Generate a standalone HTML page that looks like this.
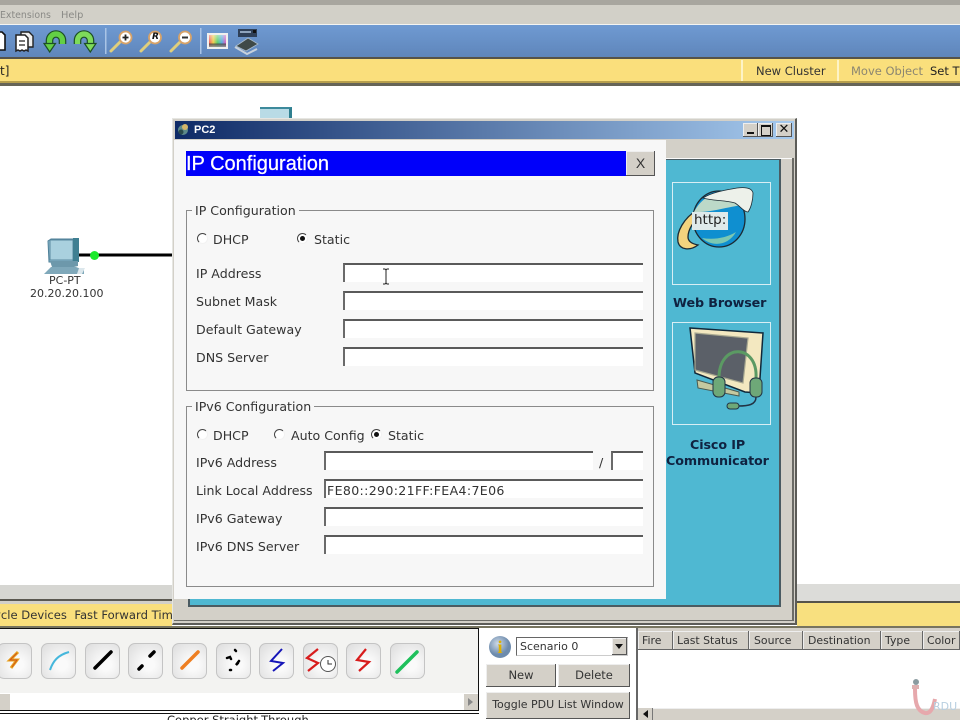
<!DOCTYPE html>
<html><head><meta charset="utf-8"><style>
html,body{margin:0;padding:0;background:#fff}
#p{position:relative;width:960px;height:720px;overflow:hidden;background:#fff;font-family:"DejaVu Sans","Liberation Sans",sans-serif;font-size:12px;color:#222}
.a{position:absolute}
.t{position:absolute;white-space:nowrap;line-height:16px;font-size:12.6px;color:#333}
.in{position:absolute;height:17px;background:#fff;border-top:2px solid #5a5a5a;border-left:2px solid #6a6a6a;box-sizing:content-box}
.fs{position:absolute;border:1px solid #8a8a8a;box-sizing:border-box}
.lg{position:absolute;background:#f7f7f7;padding:0 3px;font-size:12.6px;line-height:14px;color:#333;white-space:nowrap}
.r{position:absolute;width:9px;height:9px;border-radius:50%;border:1px solid #f2f2f2;border-top-color:#444;border-left-color:#444;background:#fff}
.r.on:after{content:"";position:absolute;left:2px;top:2px;width:5px;height:5px;background:#111;border-radius:50%}
.btn{position:absolute;background:#d4d0c8;box-shadow:inset -1px -1px 0 #555,inset 1px 1px 0 #eee;text-align:center;color:#333;font-size:12px}
.tool{position:absolute;top:643px;width:35px;height:36px;border-radius:7px;border:1px solid #c4c4c4;background:radial-gradient(circle at 60% 60%,#fafafa 20%,#dcdcdc 100%);box-sizing:border-box}
.th{position:absolute;top:631px;height:19px;background:#d4d0c8;box-shadow:inset -1px -1px 0 #666,inset 1px 1px 0 #eee;font-size:10.9px;line-height:20px;color:#333;padding-left:4px;box-sizing:border-box;white-space:nowrap;overflow:hidden}
.b{font-family:'DejaVu Sans',sans-serif;font-size:12.7px;font-weight:bold;color:#0f2240;letter-spacing:-.1px}
</style></head><body><div id="p">

<!-- top chrome -->
<div class="a" style="left:0;top:0;width:960px;height:5px;background:#a8a69f"></div>
<div class="a" style="left:0;top:5px;width:960px;height:19px;background:#d2d0c8"></div>
<div class="t" style="left:0;top:8px;font-size:9.400px;color:#8a8a86">Extensions</div>
<div class="t" style="left:61px;top:8px;font-size:9.800px;color:#8a8a86">Help</div>
<div class="a" style="left:0;top:24px;width:960px;height:1px;background:#f4f4f2"></div>
<div class="a" style="left:0;top:25px;width:960px;height:32px;background:linear-gradient(#6f9ad2,#5f86bb)"></div>
<div class="a" style="left:0;top:57px;width:960px;height:2px;background:#55534a"></div>
<div class="a" style="left:0;top:59px;width:960px;height:24px;background:#fadf7c"></div>
<div class="a" style="left:0;top:81px;width:960px;height:2px;background:#b79f4d"></div>
<div class="a" style="left:0;top:83px;width:960px;height:3px;background:#666458"></div>
<div class="t" style="left:0;top:63px;font-size:12px;color:#222">t]</div>
<div class="a" style="left:741px;top:60px;width:2px;height:21px;background:#fdf3c6"></div>
<div class="a" style="left:837px;top:60px;width:2px;height:21px;background:#fdf3c6"></div>
<div class="t" style="left:756px;top:63px;font-size:11.5px;color:#333">New Cluster</div>
<div class="t" style="left:851px;top:63px;font-size:11.5px;color:#8b8671">Move Object</div>
<div class="t" style="left:930px;top:63px;font-size:11.5px;color:#222">Set T</div>

<!-- toolbar icons -->
<svg class="a" style="left:0;top:25px" width="270" height="32" viewBox="0 25 270 32">
 <defs>
  <linearGradient id="hue" x1="0" x2="1" y1="0" y2="0"><stop offset="0" stop-color="#e55"/><stop offset=".25" stop-color="#ec4"/><stop offset=".5" stop-color="#5c6"/><stop offset=".75" stop-color="#5ad"/><stop offset="1" stop-color="#d5b"/></linearGradient>
  <linearGradient id="lt" x1="0" x2="0" y1="0" y2="1"><stop offset="0" stop-color="#fff" stop-opacity=".5"/><stop offset=".7" stop-color="#fff" stop-opacity="0"/><stop offset=".72" stop-color="#444" stop-opacity=".8"/><stop offset="1" stop-color="#999" stop-opacity=".9"/></linearGradient>
 </defs>
 <path d="M-2 32h4l3 3v15h-7z" fill="#fff" stroke="#111" stroke-width="1.6"/>
 <path d="M21 32h8l4 4v11h-12z" fill="#eee" stroke="#222" stroke-width="1.4"/>
 <path d="M16 35h9l3 3v13l-2-1-2 1-2-1-2 1-2-1-2 1z" fill="#fff" stroke="#222" stroke-width="1.5"/>
 <path d="M19 41h6M19 45h6" stroke="#222" stroke-width="1.2"/>
 <!-- undo -->
 <path d="M62.500 44v-3.500a6.500 6.500 0 0 0-13 0v4" fill="none" stroke="#1d4f25" stroke-width="7.600"/>
 <path d="M62.500 44v-3.500a6.500 6.500 0 0 0-13 0v4" fill="none" stroke="#63cf45" stroke-width="5.200"/>
 <path d="M44 43.500h11.500L49.700 52z" fill="#63cf45" stroke="#1d4f25" stroke-width="1.200"/>
 <!-- redo -->
 <path d="M77.500 44v-3.500a6.500 6.500 0 0 1 13 0v4" fill="none" stroke="#1d4f25" stroke-width="7.600"/>
 <path d="M77.500 44v-3.500a6.500 6.500 0 0 1 13 0v4" fill="none" stroke="#7edb5a" stroke-width="5.200"/>
 <path d="M84.500 43.500H96L90.300 52z" fill="#7edb5a" stroke="#1d4f25" stroke-width="1.200"/>
 <rect x="105" y="28" width="1.500" height="26" fill="#a9c4e6"/>
 <path d="M111 51l9-9" stroke="#e0cf7c" stroke-width="3" stroke-linecap="round"/><circle cx="125.500" cy="37.500" r="6" fill="#fff" stroke="#d7a268" stroke-width="1.800"/><path d="M122.500 37.500h6M125.500 34.500v6" stroke="#222" stroke-width="1.800"/>
 <path d="M141 51l9-9" stroke="#e0cf7c" stroke-width="3" stroke-linecap="round"/><circle cx="155" cy="37.500" r="6" fill="#fff" stroke="#d7a268" stroke-width="1.800"/>
 <path d="M171 51l9-9" stroke="#e0cf7c" stroke-width="3" stroke-linecap="round"/><circle cx="185" cy="37.500" r="6" fill="#fff" stroke="#d7a268" stroke-width="1.800"/><path d="M182 37.500h6" stroke="#333" stroke-width="2"/>
 <rect x="200" y="28" width="1.500" height="26" fill="#a9c4e6"/>
 <rect x="207" y="33" width="21" height="16" fill="#f0f0ee"/>
 <rect x="209" y="35" width="17" height="12" fill="url(#hue)"/><rect x="209" y="35" width="17" height="12" fill="url(#lt)"/>
 <rect x="238" y="29" width="19" height="8" fill="#2f4058"/><rect x="240" y="31" width="11" height="2" fill="#8fa4bd"/><rect x="253" y="30" width="3" height="3" fill="#111"/>
 <path d="M236 46l12-8 10 6-12 7z" fill="#3f4a48" stroke="#a9bccc" stroke-width=".8"/><path d="M235 47l12 7 10-5" fill="none" stroke="#c8d2dc" stroke-width="2"/>
</svg>
<div class="t" style="left:152px;top:29px;font-size:9px;font-weight:bold;font-style:italic;color:#111;line-height:16px">R</div>

<!-- canvas PC -->
<svg class="a" style="left:40px;top:232px" width="140" height="45" viewBox="40 232 140 45">
 <path d="M79 255H172" stroke="#000" stroke-width="3"/>
 <path d="M51 239h25v2l-3 2v19H49l-1-21z" fill="#8fbcd1" stroke="#4d7f97"/>
 <rect x="50" y="240" width="23" height="20" fill="#a9d0de" stroke="#5b8aa0"/>
 <rect x="73" y="238" width="6" height="24" fill="#3f7f92"/>
 <path d="M50 261h28v5l-4 1H52z" fill="#6d98ab"/>
 <path d="M44 274l7-7h25l8 3v4z" fill="#7fa8ba"/>
 <path d="M79 268l6 0-3 6h-5z" fill="#dce7ec"/>
 <circle cx="94.500" cy="255.500" r="4.500" fill="#1cea2c"/>
</svg>
<div class="t" style="left:49px;top:273px;font-size:11px;color:#333">PC-PT</div>
<div class="t" style="left:30px;top:286px;font-size:11px;color:#333">20.20.20.100</div>
<div class="a" style="left:260px;top:107px;width:32px;height:11px;background:#b9dbe6;border-top:2px solid #3d8a9c;border-right:3px solid #2f7f8f;box-sizing:border-box"></div>

<!-- hatch + bottom yellow -->
<div class="a" style="left:0;top:585px;width:172px;height:14px;background:#d6d6d2"></div>
<div class="a" style="left:797px;top:584px;width:163px;height:17px;background:#dcdcd9"></div>
<div class="a" style="left:0;top:599px;width:172px;height:2px;background:#5a5850"></div>
<div class="a" style="left:0;top:601px;width:172px;height:3px;background:#d3d0c8"></div>
<div class="a" style="left:797px;top:601px;width:163px;height:2px;background:#55534a"></div>
<div class="a" style="left:0;top:604px;width:172px;height:22px;background:#fadf7c"></div>
<div class="a" style="left:797px;top:603px;width:163px;height:23px;background:#f8e07f"></div>
<div class="a" style="left:0;top:626px;width:960px;height:2px;background:#77745f"></div>
<div class="t" style="left:-6px;top:607px;font-size:11.6px;color:#333;width:178px;overflow:hidden">ycle Devices&nbsp;&nbsp;Fast Forward Time</div>

<!-- dialog -->
<div class="a" style="left:172px;top:118px;width:625px;height:507px;background:#d3d0c8;border:1px solid #e6e6e2;border-right:2px solid #5c5c58;border-bottom:2px solid #5c5c58;box-sizing:border-box"></div>
<div class="a" style="left:175px;top:121px;width:619px;height:18px;background:linear-gradient(90deg,#0e2a66,#a6caee)"></div>
<svg class="a" style="left:176px;top:122px" width="16" height="16"><circle cx="7" cy="8" r="5" fill="#5d8a8a"/><circle cx="9" cy="5" r="3" fill="#d2b46a"/><circle cx="5" cy="10" r="2.500" fill="#2a4a4a"/></svg>
<div class="t" style="left:194px;top:122px;font-size:11px;font-weight:bold;color:#fff;font-family:'Liberation Sans',sans-serif">PC2</div>
<div class="btn" style="left:743px;top:123px;width:15px;height:14px"><div class="a" style="left:4px;top:9px;width:7px;height:2px;background:#111"></div></div>
<div class="btn" style="left:758px;top:123px;width:15px;height:14px"><div class="a" style="left:3px;top:2px;width:8px;height:8px;border:1px solid #111;border-top-width:2px"></div></div>
<div class="btn" style="left:776px;top:123px;width:16px;height:14px;font-size:13px;line-height:13px;font-weight:bold;color:#111">✕</div>

<div class="a" style="left:188px;top:158px;width:593px;height:449px;background:#4fb8d2;border:2px solid #4b5b62;box-sizing:border-box"></div>
<div class="a" style="left:666px;top:158px;width:126px;height:1px;background:#fafafa"></div>
<div class="a" style="left:792px;top:158px;width:2px;height:462px;background:#6b6b66"></div>
<div class="a" style="left:174px;top:620px;width:620px;height:1px;background:#6b6b66"></div>
<div class="a" style="left:174px;top:140px;width:492px;height:459px;background:#f7f7f7"></div>

<!-- header -->
<div class="a" style="left:186px;top:151px;width:440px;height:25px;background:#0000fa"></div>
<div class="t" style="left:186px;top:152px;font-family:'Liberation Sans',sans-serif;font-size:20px;line-height:24px;color:#fff;-webkit-text-stroke:.25px #fff">IP Configuration</div>
<div class="btn" style="left:626px;top:151px;width:29px;height:25px;line-height:25px;font-size:14px;font-family:'Liberation Sans',sans-serif">X</div>

<!-- IP config -->
<div class="fs" style="left:186px;top:210px;width:468px;height:181px"></div>
<div class="lg" style="left:192px;top:204px">IP Configuration</div>
<div class="r" style="left:197px;top:233px"></div><div class="t" style="left:213px;top:232px">DHCP</div>
<div class="r on" style="left:297px;top:233px"></div><div class="t" style="left:314px;top:232px">Static</div>
<div class="t" style="left:196px;top:266px">IP Address</div>
<div class="t" style="left:196px;top:294px">Subnet Mask</div>
<div class="t" style="left:196px;top:322px">Default Gateway</div>
<div class="t" style="left:196px;top:350px">DNS Server</div>
<div class="in" style="left:343px;top:263px;width:298px"></div>
<div class="in" style="left:343px;top:291px;width:298px"></div>
<div class="in" style="left:343px;top:319px;width:298px"></div>
<div class="in" style="left:343px;top:347px;width:298px"></div>
<svg class="a" style="left:381px;top:268px" width="10" height="18"><path d="M2 1h2l1 1 1-1h2M5 2v13M2 16h2l1-1 1 1h2" stroke="#222" fill="none"/></svg>

<!-- IPv6 -->
<div class="fs" style="left:186px;top:406px;width:468px;height:181px"></div>
<div class="lg" style="left:192px;top:400px">IPv6 Configuration</div>
<div class="r" style="left:197px;top:429px"></div><div class="t" style="left:213px;top:428px">DHCP</div>
<div class="r" style="left:274px;top:429px"></div><div class="t" style="left:291px;top:428px">Auto Config</div>
<div class="r on" style="left:371px;top:429px"></div><div class="t" style="left:388px;top:428px">Static</div>
<div class="t" style="left:196px;top:455px">IPv6 Address</div>
<div class="t" style="left:196px;top:483px">Link Local Address</div>
<div class="t" style="left:196px;top:511px">IPv6 Gateway</div>
<div class="t" style="left:196px;top:539px">IPv6 DNS Server</div>
<div class="in" style="left:324px;top:451px;width:267px"></div>
<div class="t" style="left:599px;top:455px">/</div>
<div class="in" style="left:611px;top:451px;width:30px"></div>
<div class="in" style="left:324px;top:479px;width:317px"></div>
<div class="t" style="left:327px;top:483px;letter-spacing:.33px">FE80::290:21FF:FEA4:7E06</div>
<div class="in" style="left:324px;top:507px;width:317px"></div>
<div class="in" style="left:324px;top:535px;width:317px"></div>

<!-- right apps -->
<div class="a" style="left:672px;top:182px;width:99px;height:103px;border:1px solid #d8eef4;box-sizing:border-box"></div>
<div class="a" style="left:672px;top:322px;width:99px;height:103px;border:1px solid #d8eef4;box-sizing:border-box"></div>
<svg class="a" style="left:672px;top:182px" width="99" height="90">
 <path d="M25 28C12 36 4 50 6 60c2 8 12 9 20 3-5-1-10-3-10-8 0-8 6-16 12-21z" fill="#f4d37e" stroke="#1c2a33" stroke-width="1.300"/>
 <ellipse cx="47" cy="37" rx="26" ry="28" fill="#0f8fd0" stroke="#1c2a33" stroke-width="1.300"/>
 <path d="M22 30C28 18 40 9 56 11c6 2 12 6 14 12-14 2-34 8-48 7z" fill="#bcd9c8"/>
 <path d="M30 56c10 9 26 8 34-6-10 6-22 8-34 6z" fill="#7cc8b2"/>
 <path d="M31 16C40 10 54 8 65 6c8-1 15 0 16 5 0 7-2 15-5 19-4 0-8-6-13-9-10-3-22-2-32-5z" fill="#edf1ea" stroke="#1c2a33" stroke-width=".8"/>
 <rect x="20" y="30" width="36" height="18" fill="#dfeaea"/>
</svg>
<div class="t" style="left:694px;top:212px;font-size:13.5px;color:#222">http:</div>
<div class="t b" style="left:673px;top:295px">Web Browser</div>
<svg class="a" style="left:672px;top:322px" width="99" height="90">
 <path d="M18 6l73 5-4 60-14-1-50-19z" fill="#f3e8c0" stroke="#10283a" stroke-width="1.500"/>
 <path d="M23 11l53 5-5 45-48-13z" fill="#5b6068" stroke="#a8a890" stroke-width="1.200"/>
 <path d="M25 58l42 12 0 4-41-8z" fill="#c5c9a0" stroke="#4a5a50"/>
 <path d="M47 56c0-36 39-34 37 0" fill="none" stroke="#5b9a63" stroke-width="3"/>
 <rect x="41" y="55" width="12" height="20" rx="5" fill="#6ea878" stroke="#234"/>
 <rect x="78" y="56" width="12" height="19" rx="5" fill="#6ea878" stroke="#234"/>
 <path d="M84 75c0 8-8 9-18 9" fill="none" stroke="#234" stroke-width="1.500"/>
 <rect x="55" y="81" width="12" height="6" rx="3" fill="#6ea878" stroke="#234"/>
</svg>
<div class="t b" style="left:690px;top:437px">Cisco IP</div>
<div class="t b" style="left:666px;top:453px">Communicator</div>

<!-- bottom left panel -->
<div class="a" style="left:0;top:628px;width:479px;height:1px;background:#111"></div>
<div class="a" style="left:0;top:629px;width:478px;height:64px;background:#f3f3f1"></div>
<div class="a" style="left:0;top:693px;width:478px;height:17px;background:#fff"></div>
<div class="a" style="left:0;top:710px;width:479px;height:1px;background:#111"></div>
<div class="a" style="left:478px;top:628px;width:1px;height:83px;background:#111"></div>
<div class="a" style="left:0;top:713px;width:479px;height:1px;background:#111"></div>
<div class="a" style="left:0;top:694px;width:10px;height:16px;background:#d4d0c8"></div>
<div class="a" style="left:464px;top:694px;width:14px;height:16px;background:#d4d0c8"></div>
<div class="a" style="left:468px;top:698px;border-left:5px solid #888;border-top:4px solid transparent;border-bottom:4px solid transparent"></div>
<div class="t" style="left:167px;top:713px;font-size:11.5px;line-height:14px;color:#222">Copper Straight-Through</div>

<div class="tool" style="left:-3px"></div><div class="tool" style="left:41px"></div><div class="tool" style="left:85px"></div><div class="tool" style="left:128px"></div><div class="tool" style="left:172px"></div><div class="tool" style="left:216px"></div><div class="tool" style="left:259px"></div><div class="tool" style="left:303px"></div><div class="tool" style="left:346px"></div><div class="tool" style="left:390px"></div>
<svg class="a" style="left:0;top:640px" width="430" height="44" viewBox="0 640 430 44">
 <path d="M18 652l-8 8h7l-6 8" fill="none" stroke="#e8a21c" stroke-width="3"/><path d="M17 653l-7 7h7l-5 7" fill="none" stroke="#d0561b" stroke-width="1"/>
 <path d="M50 670c3-9 8-15 19-18" fill="none" stroke="#45b7dc" stroke-width="2"/>
 <path d="M95 668l16-16" stroke="#000" stroke-width="3.500" stroke-linecap="round"/>
 <path d="M139 669l3-3M150 656l4-4" stroke="#000" stroke-width="3.500" stroke-linecap="round"/>
 <path d="M182 668l16-16" stroke="#ee7f22" stroke-width="3.500" stroke-linecap="round"/>
 <path d="M235 650l1 1M227 658l3-1 1 2M238 663l-2 2 3-4M230 670l1 0" stroke="#000" stroke-width="2.500" stroke-linecap="round" fill="none"/>
 <path d="M282 649l-11 12 12 2-10 8" fill="none" stroke="#1616b8" stroke-width="2"/>
 <path d="M318 649l-11 9 11 5-10 8" fill="none" stroke="#d81c1c" stroke-width="2.200"/>
 <circle cx="328" cy="664" r="7.500" fill="#fff" stroke="#555"/><path d="M328 660v4h4" stroke="#333" fill="none"/>
 <path d="M366 649l-9 11 12 2-10 9" fill="none" stroke="#d81c1c" stroke-width="2.200"/>
 <path d="M397 672l20-20" stroke="#1fc05c" stroke-width="3.500" stroke-linecap="round"/>
</svg>

<!-- scenario -->
<svg class="a" style="left:488px;top:634px" width="25" height="26"><defs><radialGradient id="g" cx=".4" cy=".35"><stop offset="0" stop-color="#cfdbe8"/><stop offset="1" stop-color="#6d8bad"/></radialGradient></defs><circle cx="12" cy="13" r="11" fill="url(#g)"/><text x="12" y="19" font-family="Liberation Serif,serif" font-weight="bold" font-size="18" text-anchor="middle" fill="#e0b000">i</text></svg>
<div class="a" style="left:516px;top:637px;width:112px;height:19px;border:1px solid #666;border-bottom-color:#ccc;border-right-color:#ccc;box-sizing:border-box;background:#fff"></div>
<div class="t" style="left:520px;top:639px;font-size:11px">Scenario 0</div>
<div class="btn" style="left:612px;top:638px;width:15px;height:17px"><div class="a" style="left:3px;top:6px;border-top:5px solid #111;border-left:4px solid transparent;border-right:4px solid transparent"></div></div>
<div class="btn" style="left:486px;top:664px;width:70px;height:23px;line-height:23px;font-size:11.5px">New</div>
<div class="btn" style="left:558px;top:664px;width:72px;height:23px;line-height:23px;font-size:11.5px">Delete</div>
<div class="btn" style="left:486px;top:692px;width:144px;height:27px;line-height:26px;font-size:11px">Toggle PDU List Window</div>

<!-- PDU table -->
<div class="a" style="left:636px;top:628px;width:2px;height:92px;background:#666"></div>
<div class="a" style="left:638px;top:628px;width:322px;height:3px;background:#d4d0c8"></div>
<div class="th" style="left:638px;width:35px">Fire</div>
<div class="th" style="left:673px;width:76px">Last Status</div>
<div class="th" style="left:749px;width:54px;padding-left:5px">Source</div>
<div class="th" style="left:803px;width:78px;padding-left:5px">Destination</div>
<div class="th" style="left:881px;width:42px">Type</div>
<div class="th" style="left:923px;width:37px">Color</div>
<div class="a" style="left:638px;top:708px;width:322px;height:12px;background:#d4d0c8;border-top:1px solid #eee;box-sizing:border-box"></div>
<div class="a" style="left:638px;top:708px;width:15px;height:12px;background:#d4d0c8;box-shadow:inset -1px 0 0 #777"></div>
<div class="a" style="left:643px;top:710px;border-right:5px solid #111;border-top:4px solid transparent;border-bottom:4px solid transparent"></div>
<svg class="a" style="left:908px;top:674px" width="50" height="44"><path d="M7 15c0 14 2 22 10 24 5 1 8-4 10-14" fill="none" stroke="#e6a8ac" stroke-width="4"/><circle cx="8" cy="8" r="3" fill="#8a9ba0"/><rect x="4" y="11" width="7" height="4" fill="#ddb0b0"/></svg>
<div class="t" style="left:933px;top:699px;font-size:11px;color:#b8cfe0">RDU</div>

</div></body></html>
